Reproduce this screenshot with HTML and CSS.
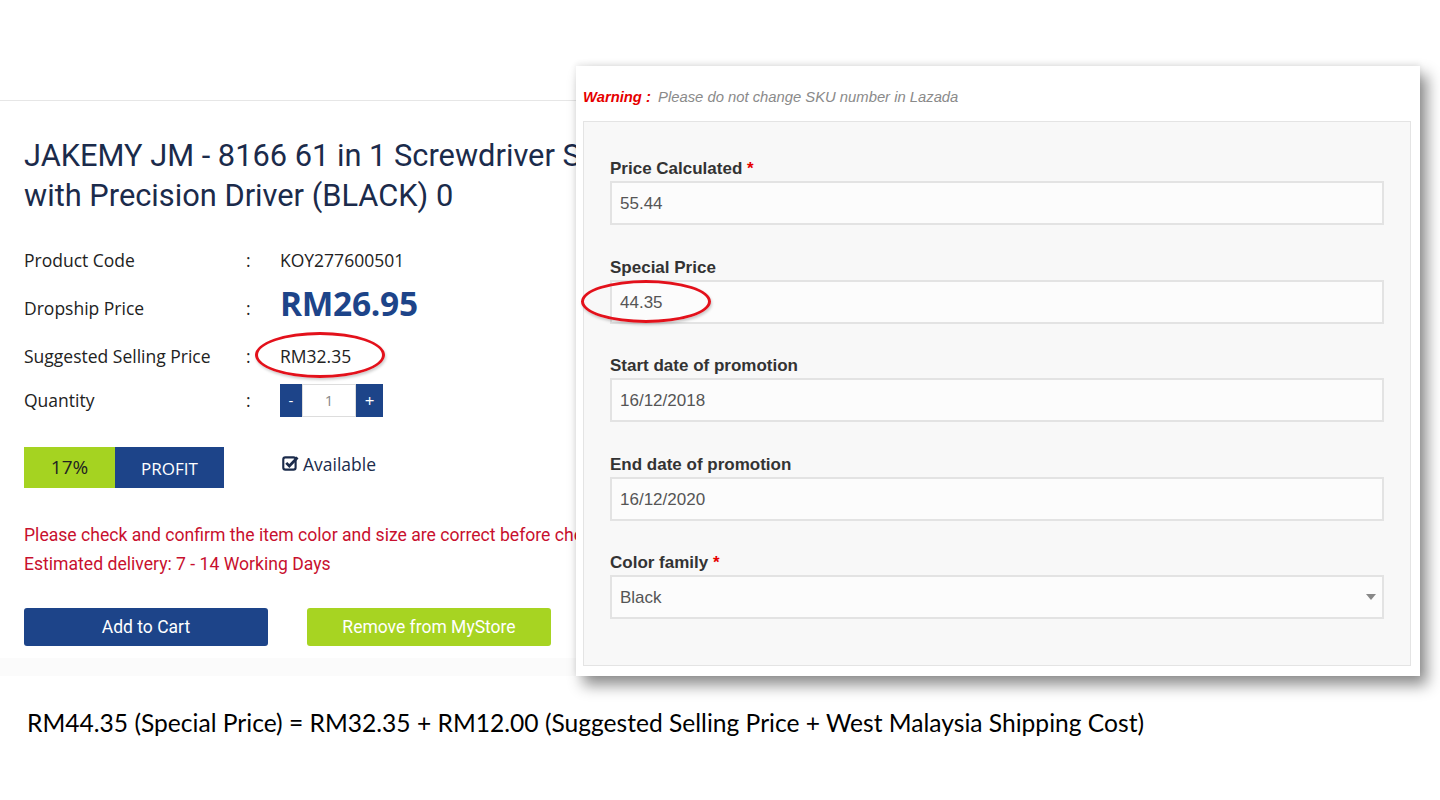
FILE: index.html
```html
<!DOCTYPE html>
<html lang="en">
<head>
  <meta charset="UTF-8">
  <title>Special Price</title>
  <link rel="stylesheet" href="styles.css">
</head>
<body>
  <div class="slide">
    <div class="page">
      <div class="page-head"></div>

      <h1 class="title">JAKEMY JM - 8166 61 in 1 Screwdriver Set with Precision Driver (BLACK) 0</h1>

      <div class="specs">
        <div class="spec-row">
          <span class="spec-label">Product Code</span>
          <span class="spec-colon">:</span>
          <span class="spec-value">KOY277600501</span>
        </div>
        <div class="spec-row">
          <span class="spec-label">Dropship Price</span>
          <span class="spec-colon">:</span>
          <span class="spec-value price">RM26.95</span>
        </div>
        <div class="spec-row">
          <span class="spec-label">Suggested Selling Price</span>
          <span class="spec-colon">:</span>
          <span class="spec-value">RM32.35</span>
        </div>
        <div class="spec-row qty-row">
          <span class="spec-label">Quantity</span>
          <span class="spec-colon">:</span>
          <div class="qty">
            <span class="qty-btn minus">-</span>
            <span class="qty-input">1</span>
            <span class="qty-btn plus">+</span>
          </div>
        </div>
      </div>

      <div class="profit-row">
        <div class="profit">
          <span class="profit-pct">17%</span>
          <span class="profit-label">PROFIT</span>
        </div>
        <div class="stock">
          <svg width="17" height="17" viewBox="0 0 16 16">
            <rect x="1.2" y="2.2" width="11.6" height="11.6" rx="2" fill="none" stroke="#1b2b4b" stroke-width="2"/>
            <path d="M4 7.4 L6.9 10.3 L14.6 2.4" fill="none" stroke="#1b2b4b" stroke-width="2.6"/>
          </svg>
          <span>Available</span>
        </div>
      </div>

      <div class="notes">
        <p>Please check and confirm the item color and size are correct before checkout.</p>
        <p>Estimated delivery: 7 - 14 Working Days</p>
      </div>

      <div class="actions">
        <button class="btn btn-cart">Add to Cart</button>
        <button class="btn btn-remove">Remove from MyStore</button>
      </div>

      <div class="page-foot"></div>

      <div class="ring ring-ssp"></div>
    </div>

    <div class="panel">
      <p class="warning"><b>Warning :</b> <i>Please do not change SKU number in Lazada</i></p>
      <div class="panel-body">
        <div class="field">
          <label>Price Calculated <span class="req">*</span></label>
          <div class="input">55.44</div>
        </div>
        <div class="field">
          <label>Special Price</label>
          <div class="input">44.35</div>
        </div>
        <div class="field">
          <label>Start date of promotion</label>
          <div class="input">16/12/2018</div>
        </div>
        <div class="field">
          <label>End date of promotion</label>
          <div class="input">16/12/2020</div>
        </div>
        <div class="field">
          <label>Color family <span class="req">*</span></label>
          <div class="input select">Black</div>
        </div>
      </div>
      <div class="ring ring-special"></div>
    </div>

    <p class="caption">RM44.35 (Special Price) = RM32.35 + RM12.00 (Suggested Selling Price + West Malaysia Shipping Cost)</p>
  </div>
</body>
</html>
```

FILE: styles.css
```css
body {
  margin: 0;
  background: #fff;
}
.slide {
  position: relative;
  width: 1440px;
  height: 800px;
  overflow: hidden;
}

/* left: product page */
.page {
  position: relative;
  width: 1000px;
  height: 676px;
  font-family: "Open Sans", sans-serif;
  color: #222;
}
.page-head {
  height: 100px;
  border-bottom: 1px solid #e6e6e6;
}
.title {
  width: 615px;
  margin: 35px 0 0 24px;
  font-family: Roboto, sans-serif;
  font-size: 30.8px;
  font-weight: 400;
  line-height: 40px;
  color: #1b2b4b;
}
.specs {
  margin: 20px 0 0 24px;
}
.spec-row {
  display: flex;
  align-items: center;
  height: 48px;
  font-size: 17.5px;
}
.spec-row.qty-row {
  height: 40px;
}
.spec-label {
  width: 222px;
}
.spec-colon {
  width: 34px;
}
.spec-value.price {
  margin-top: -10px;
  font-size: 33.5px;
  font-weight: 700;
  color: #1d4489;
  letter-spacing: -0.3px;
}
.qty {
  display: flex;
  height: 33px;
}
.qty-btn {
  background: #1d4489;
  color: #fff;
  font-size: 15px;
  line-height: 33px;
  text-align: center;
}
.qty-btn.minus {
  width: 22px;
}
.qty-btn.plus {
  width: 27px;
  font-size: 17px;
}
.qty-input {
  width: 52px;
  border: 1px solid #ddd;
  color: #888;
  font-size: 15px;
  line-height: 31px;
  text-align: center;
}
.profit-row {
  display: flex;
  align-items: center;
  margin: 27px 0 0 24px;
}
.profit {
  display: flex;
  height: 41px;
}
.profit-pct {
  width: 91px;
  background: #a5d321;
  color: #222;
  font-size: 19px;
  line-height: 41px;
  text-align: center;
}
.profit-label {
  width: 109px;
  background: #1d4489;
  color: #fff;
  font-size: 17px;
  line-height: 43px;
  text-align: center;
}
.stock {
  display: flex;
  align-items: center;
  gap: 4px;
  margin: -8px 0 0 58px;
  font-size: 17.5px;
  color: #1b2b4b;
}
.notes {
  margin: 33px 0 0 24px;
  font-family: Roboto, sans-serif;
  font-size: 17.6px;
  line-height: 29px;
  color: #c8102e;
}
.notes p {
  margin: 0;
  white-space: nowrap;
}
.actions {
  display: flex;
  gap: 39px;
  margin: 29px 0 0 24px;
}
.btn {
  width: 244px;
  height: 38px;
  border: none;
  border-radius: 3px;
  font-family: Roboto, sans-serif;
  font-size: 17.5px;
  color: #fff;
}
.btn-cart {
  background: #1d4489;
}
.btn-remove {
  background: #a7d422;
}
.page-foot {
  position: absolute;
  left: 0;
  right: 0;
  bottom: 0;
  height: 18px;
  background: #fbfbfb;
}

/* red marker rings */
.ring {
  position: absolute;
  border: 3px solid #e3111b;
  border-radius: 50%;
  box-shadow: 1px 2px 3px rgba(0, 0, 0, 0.2);
}
.ring-ssp {
  left: 255px;
  top: 332px;
  width: 124px;
  height: 40px;
}
.ring-special {
  left: 5px;
  top: 214px;
  width: 124px;
  height: 37px;
}

/* right: marketplace form */
.panel {
  position: absolute;
  left: 576px;
  top: 66px;
  width: 844px;
  height: 610px;
  box-sizing: border-box;
  padding: 0 9px 10px 7px;
  background: #fff;
  box-shadow: 7px 9px 14px rgba(0, 0, 0, 0.45), 0 -2px 6px rgba(0, 0, 0, 0.08);
  font-family: "Liberation Sans", Arial, sans-serif;
}
.warning {
  margin: 0;
  padding: 22px 0 15px;
  font-size: 14.8px;
  line-height: 18px;
  color: #8a8a8a;
}
.warning b {
  color: #e60000;
  font-style: italic;
  margin-right: 3px;
}
.panel-body {
  height: 545px;
  box-sizing: border-box;
  padding: 37px 26px 0;
  border: 1px solid #e4e4e4;
  background: #f8f8f8;
}
.field {
  margin-bottom: 32.5px;
}
.field label {
  display: block;
  margin-bottom: 2px;
  font-size: 17px;
  font-weight: 700;
  line-height: 20px;
  color: #333;
}
.req {
  color: #e60000;
}
.input {
  position: relative;
  height: 44px;
  box-sizing: border-box;
  padding-left: 8px;
  border: 2px solid #e3e3e3;
  background: #fcfcfc;
  font-size: 17px;
  line-height: 42px;
  color: #555;
}
.input.select::after {
  content: "";
  position: absolute;
  right: 6px;
  top: 17px;
  border-left: 5px solid transparent;
  border-right: 5px solid transparent;
  border-top: 6px solid #888;
}

.caption {
  margin: 32px 0 0 27px;
  font-family: Lato, sans-serif;
  font-size: 24.6px;
  line-height: 30px;
  color: #000;
  white-space: nowrap;
}
```
